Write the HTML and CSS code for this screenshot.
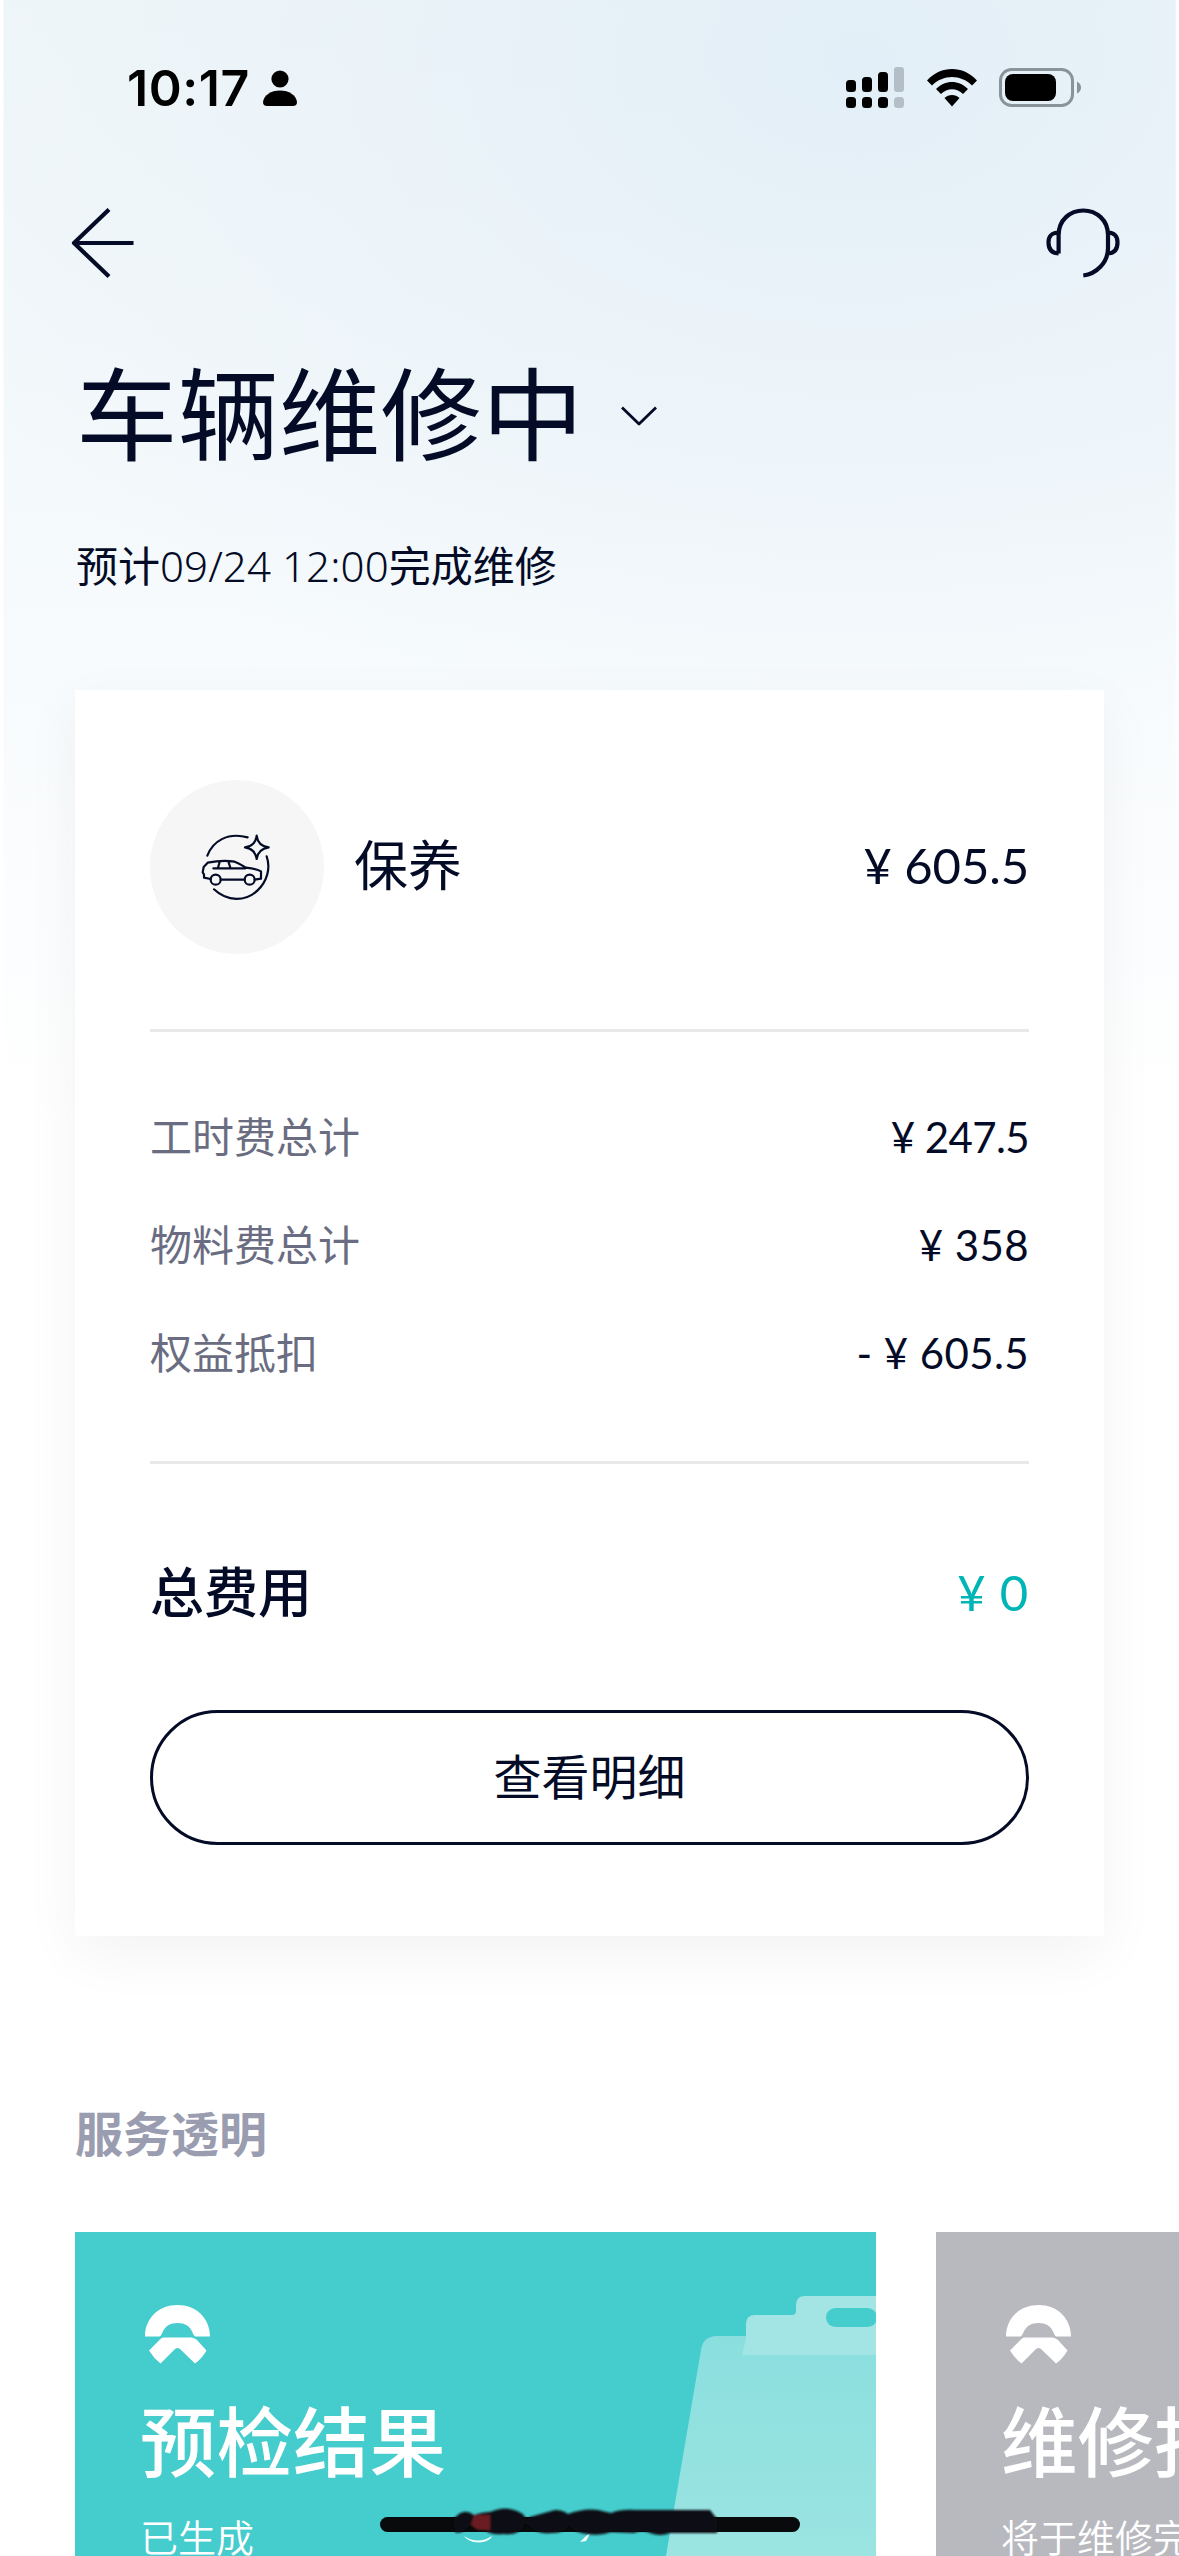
FILE: index.html
```html
<!DOCTYPE html>
<html lang="zh-CN">
<head>
<meta charset="utf-8">
<title>车辆维修中</title>
<link rel="stylesheet" href="styles.css">
</head>
<body>
<main class="screen">
  <header class="status">
    <div class="status-left">
      <span class="clock">10:17</span>
      <svg class="person" width="34" height="36" viewBox="0 0 34 36"><circle cx="17" cy="9" r="8.6"/><path d="M4 36Q0 36 0 32C1 25 8 20.500 17 20.500S33 25 34 32Q34 36 30 36Z"/></svg>
    </div>
    <div class="status-right">
      <svg width="58" height="42" viewBox="0 0 58 42">
        <rect x="0" y="13" width="10" height="12" rx="3.500"/><rect x="16" y="10" width="10" height="15" rx="3.500"/><rect x="32" y="5" width="10" height="20" rx="3.500"/>
        <rect x="0" y="30" width="10" height="11" rx="3.500"/><rect x="16" y="30" width="10" height="11" rx="3.500"/><rect x="32" y="30" width="10" height="11" rx="3.500"/>
        <g fill="#b3bec7"><rect x="48" y="0" width="10" height="25" rx="3"/><rect x="48" y="30" width="10" height="11" rx="3.500"/></g>
      </svg>
      <svg class="wifi" width="50" height="38" viewBox="0 0 50 38">
        <path d="M0 11.500C14-3.800 36-3.800 50 11.500L45 16.500C34 5 16 5 5 16.500Z"/>
        <path d="M9 20C18 10.500 32 10.500 41 20L36 25C30 18.500 20 18.500 14 25Z"/>
        <path d="M17.500 29C21.500 25 28.500 25 32.500 29L25 37.500Z"/>
      </svg>
      <svg class="battery" width="83" height="40" viewBox="0 0 83 40">
        <rect x="1.500" y="1.500" width="72" height="36" rx="11" fill="none" stroke="#87949a" stroke-width="3"/>
        <rect x="6" y="6" width="51" height="27" rx="8"/><path d="M78 13.500Q82 15.500 82 19.500T78 25.500Z" fill="#87949a"/>
      </svg>
    </div>
  </header>

  <nav class="nav">
    <svg class="line-icon" width="64" height="70" viewBox="0 0 64 70"><path d="M38 1.500L3 35L38 68.500M4 35H62.500"/></svg>
    <svg class="line-icon" width="74" height="70" viewBox="0 0 74 70"><path d="M12.600 45.500V27C12.600 12 24 2.500 37.300 2.500S62 12 62 27V40C62 55 50 66 37.300 67.500M12.600 24.500C5 25 2.500 28 2.500 34.500S5 45 12.600 45.500M62 24.500C69 25 71.500 28 71.500 34.500S69 45 62 45.500"/></svg>
  </nav>

  <section class="headline">
    <h1 class="title">车辆维修中</h1>
    <svg class="chevron" width="36" height="20" viewBox="0 0 36 20"><path d="M1 1.500L18 18L35 1.500"/></svg>
  </section>
  <p class="eta">预计<span class="digits">09/24 12:00</span>完成维修</p>

  <section class="bill">
    <div class="service">
      <span class="service-icon">
        <svg width="74" height="74" viewBox="180 209 222 222">
          <path d="M202 286C218 243 262 215 323 231M380 288C393 325 380 365 352 391C316 424 262 425 222 387"/>
          <path d="M350 226Q354 258 386 261Q354 266 350 296Q346 266 315 261Q346 258 350 226Z"/>
          <path d="M212 356L192 352V342L188 336L191 320L203 307C232 301 262 300 284 304C300 309 308 318 318 322C338 324 352 327 363 333V355L344 358M242 358H314M220 324H316M234 322L239 305M265 304L271 322"/>
          <circle cx="227" cy="358" r="15"/><circle cx="329" cy="358" r="15"/>
        </svg>
      </span>
      <h2 class="service-name">保养</h2>
      <span class="price price-lg">¥ 605.5</span>
    </div>
    <dl class="items">
      <div class="item"><dt>工时费总计</dt><dd class="price price-tight">¥ 247.5</dd></div>
      <div class="item"><dt>物料费总计</dt><dd class="price">¥ 358</dd></div>
      <div class="item"><dt>权益抵扣</dt><dd class="price">- ¥ 605.5</dd></div>
    </dl>
    <div class="total"><span class="total-label">总费用</span><span class="price price-lg price-accent">¥ 0</span></div>
    <button class="detail">查看明细</button>
  </section>

  <h2 class="section-title">服务透明</h2>
  <section class="cards">
    <article class="card card-teal">
      <svg class="clipboard" width="212" height="262" viewBox="0 0 212 262">
        <defs><linearGradient id="sheet" x1="0" y1="0" x2="0" y2="1"><stop offset="0" stop-color="#8adfde"/><stop offset="1" stop-color="#9be4e2"/></linearGradient></defs>
        <path d="M37 56Q39 42 53 42H212V262H2Z" fill="url(#sheet)"/>
        <path d="M78 61L82 45V30Q82 21 91 21H128Q132 21 132 17V11Q132 2 141 2H212V61Z" fill="#a2e5e4"/>
        <rect x="162" y="14" width="51" height="19" rx="9.500" fill="#45cccc"/>
      </svg>
      <svg class="logo" width="66" height="60" viewBox="0 0 66 60"><path d="M0 31.500C0 13 14 0 32.500 0S65 13 65 31.500H50.500C47 31 48 18 32.500 18S18 31 14.500 31.500Z"/><path d="M18.500 32.500H46.500Q49 32.500 52 35L61.500 45.500Q57 53.500 50 58.500L35 44Q32.500 42 30 44L15.500 58.500Q8.500 53 4 45.500L13 36.500Q16.500 32.500 18.500 32.500Z"/></svg>
      <h3 class="card-title">预检结果</h3>
      <p class="card-note">已生成</p>
    </article>
    <article class="card card-gray">
      <svg class="logo" width="66" height="60" viewBox="0 0 66 60"><path d="M0 31.500C0 13 14 0 32.500 0S65 13 65 31.500H50.500C47 31 48 18 32.500 18S18 31 14.500 31.500Z"/><path d="M18.500 32.500H46.500Q49 32.500 52 35L61.500 45.500Q57 53.500 50 58.500L35 44Q32.500 42 30 44L15.500 58.500Q8.500 53 4 45.500L13 36.500Q16.500 32.500 18.500 32.500Z"/></svg>
      <h3 class="card-title">维修报告</h3>
      <p class="card-note">将于维修完成后生成</p>
    </article>
  </section>

  <svg class="home" width="420" height="48" viewBox="0 0 420 48">
    <defs><filter id="soft" x="-10%" y="-40%" width="120%" height="180%"><feGaussianBlur stdDeviation="1.200"/></filter></defs>
    <path d="M84 29Q98 38 112 29Q110 35 98 35.500Q88 35 84 29Z" fill="#f4ffff"/>
    <path d="M208 27L201 34L200 35L206 34L210 27Z" fill="#f4ffff"/>
    <rect x="0" y="10" width="420" height="15" rx="7.500" fill="#080a0b"/>
    <g filter="url(#soft)" fill="#0c1112">
      <path d="M74 12Q83 0 94 8Q103 5 110 5Q124 -1 134 3Q143 5 147 13L150 10Q164 6 175 3Q183 3 188 7Q204 1 218 3Q226 5 231 6Q241 2 255 3L330 3L337 12V26H290Q280 30 270 26Q262 22 254 26L231 25Q221 29 207 27Q195 26 189 18Q183 27 171 26Q157 28 149 18L145 17Q139 29 124 27Q109 28 105 23Q94 24 90 18Q81 28 75 25Z"/>
      <path d="M94 8H110V23H98L91 18Z" fill="#6a1c20"/>
    </g>
  </svg>
</main>
</body>
</html>
```
FILE: styles.css
```css
* { box-sizing: border-box; margin: 0; padding: 0; }

body {
  font-family: "Noto Sans CJK SC", sans-serif;
  color: #040b26;
  background: #fff;
}

.screen {
  position: relative;
  width: 1179px;
  height: 2556px;
  overflow: hidden;
  display: flex;
  flex-direction: column;
  background:
    linear-gradient(90deg, #fff 3px, transparent 4px, transparent 1175px, #fff 1177px),
    radial-gradient(ellipse 1000px 700px at 860px 60px, rgba(222, 236, 247, 0.75), rgba(228, 239, 248, 0.5) 45%, rgba(240, 247, 251, 0) 100%),
    linear-gradient(180deg, #eff6f8 0, #f4f9fb 480px, #f8fbfd 700px, #fff 1120px);
}

.status {
  flex: none;
  height: 170px;
  padding: 0 97px 0 127px;
  display: flex;
  justify-content: space-between;
}
.status svg { fill: #000; }
.status-left { display: flex; padding-top: 58px; }
.clock {
  width: 136px;
  font: 600 50px/60px Inter, sans-serif;
  letter-spacing: 0.600px;
  color: #000;
}
.person { margin-top: 12px; }
.status-right { display: flex; padding-top: 67px; }
.wifi { margin: 2px 0 0 23px; }
.battery { margin: 1px 0 0 22px; }

.nav {
  flex: none;
  height: 148px;
  padding: 38px 59px 0 71px;
  display: flex;
  justify-content: space-between;
}
.line-icon, .chevron, .service-icon svg {
  fill: none;
  stroke: #040b26;
  stroke-linejoin: round;
}
.line-icon { stroke-width: 4.200; }

.headline { flex: none; display: flex; height: 190px; padding-left: 76px; }
.title { font-size: 101.500px; font-weight: 400; line-height: 190px; height: 190px; margin-top: -4px; white-space: nowrap; }
.chevron { margin: 88px 0 0 37px; stroke-width: 2.800; }

.eta { flex: none; height: 182px; padding: 26px 0 0 76px; font-size: 42px; line-height: 60px; }
.digits { font-family: "Noto Sans", sans-serif; font-weight: 350; letter-spacing: 0.100px; }

.bill {
  flex: none;
  width: 1029px;
  height: 1246px;
  margin-left: 75px;
  padding: 90px 75px 0;
  background: #fff;
  box-shadow: 0 18px 54px rgba(10, 14, 28, 0.05);
}
.service {
  display: flex;
  align-items: center;
  height: 252px;
  padding-bottom: 75px;
  border-bottom: 3px solid #e9e9e9;
}
.service-icon {
  display: flex;
  align-items: center;
  justify-content: center;
  width: 174px;
  height: 174px;
  border-radius: 50%;
  background: #f6f6f6;
}
.service-icon svg { stroke-width: 6.500; stroke-linecap: round; }
.service-name { flex: 1; margin: -9px 0 0 30px; font-size: 54px; font-weight: 400; line-height: 80px; }

.price { font-family: Lato, sans-serif; font-size: 42px; letter-spacing: 0.400px; white-space: pre; }
.price-lg { font-size: 49px; letter-spacing: -0.100px; }
.price-tight { letter-spacing: -0.600px; }
.price-accent { color: #00b5b5; letter-spacing: 0.800px; }
.service .price { margin-top: -5px; }

.items { height: 432px; padding-top: 49px; border-bottom: 3px solid #e9e9e9; }
.item { display: flex; justify-content: space-between; height: 108px; line-height: 108px; }
.item dt { font-size: 42px; color: #6a6d82; }
.item dd { padding-top: 2px; }

.total { display: flex; justify-content: space-between; height: 246px; line-height: 252px; }
.total-label { font-size: 54px; font-weight: 500; }
.total .price { padding-top: 2px; }
.detail {
  display: block;
  width: 879px;
  height: 135px;
  padding-bottom: 7px;
  border: 3px solid #040b26;
  border-radius: 68px;
  background: none;
  color: inherit;
  font: 400 48px/1 "Noto Sans CJK SC", sans-serif;
}

.section-title {
  flex: none;
  height: 296px;
  padding: 160px 0 0 75px;
  font-size: 48px;
  font-weight: 700;
  line-height: 70px;
  color: #9a9cb0;
}

.cards { flex: none; display: flex; gap: 60px; padding-left: 75px; }
.card { position: relative; flex: none; width: 801px; height: 400px; padding: 73px 0 0 65px; color: #fff; }
.card-teal { background: #45cccc; }
.card-gray { background: #b8b9bf; }
.clipboard { position: absolute; right: 0; top: 62px; height: 262px; }
.logo { position: relative; display: block; margin-left: 5px; fill: #fff; }
.card-title { position: relative; margin-top: 23px; font-size: 76.500px; font-weight: 500; line-height: 100px; }
.card-note { margin-top: 18px; font-size: 38px; font-weight: 350; line-height: 60px; }

.home { position: absolute; left: 380px; top: 2507px; }
```
